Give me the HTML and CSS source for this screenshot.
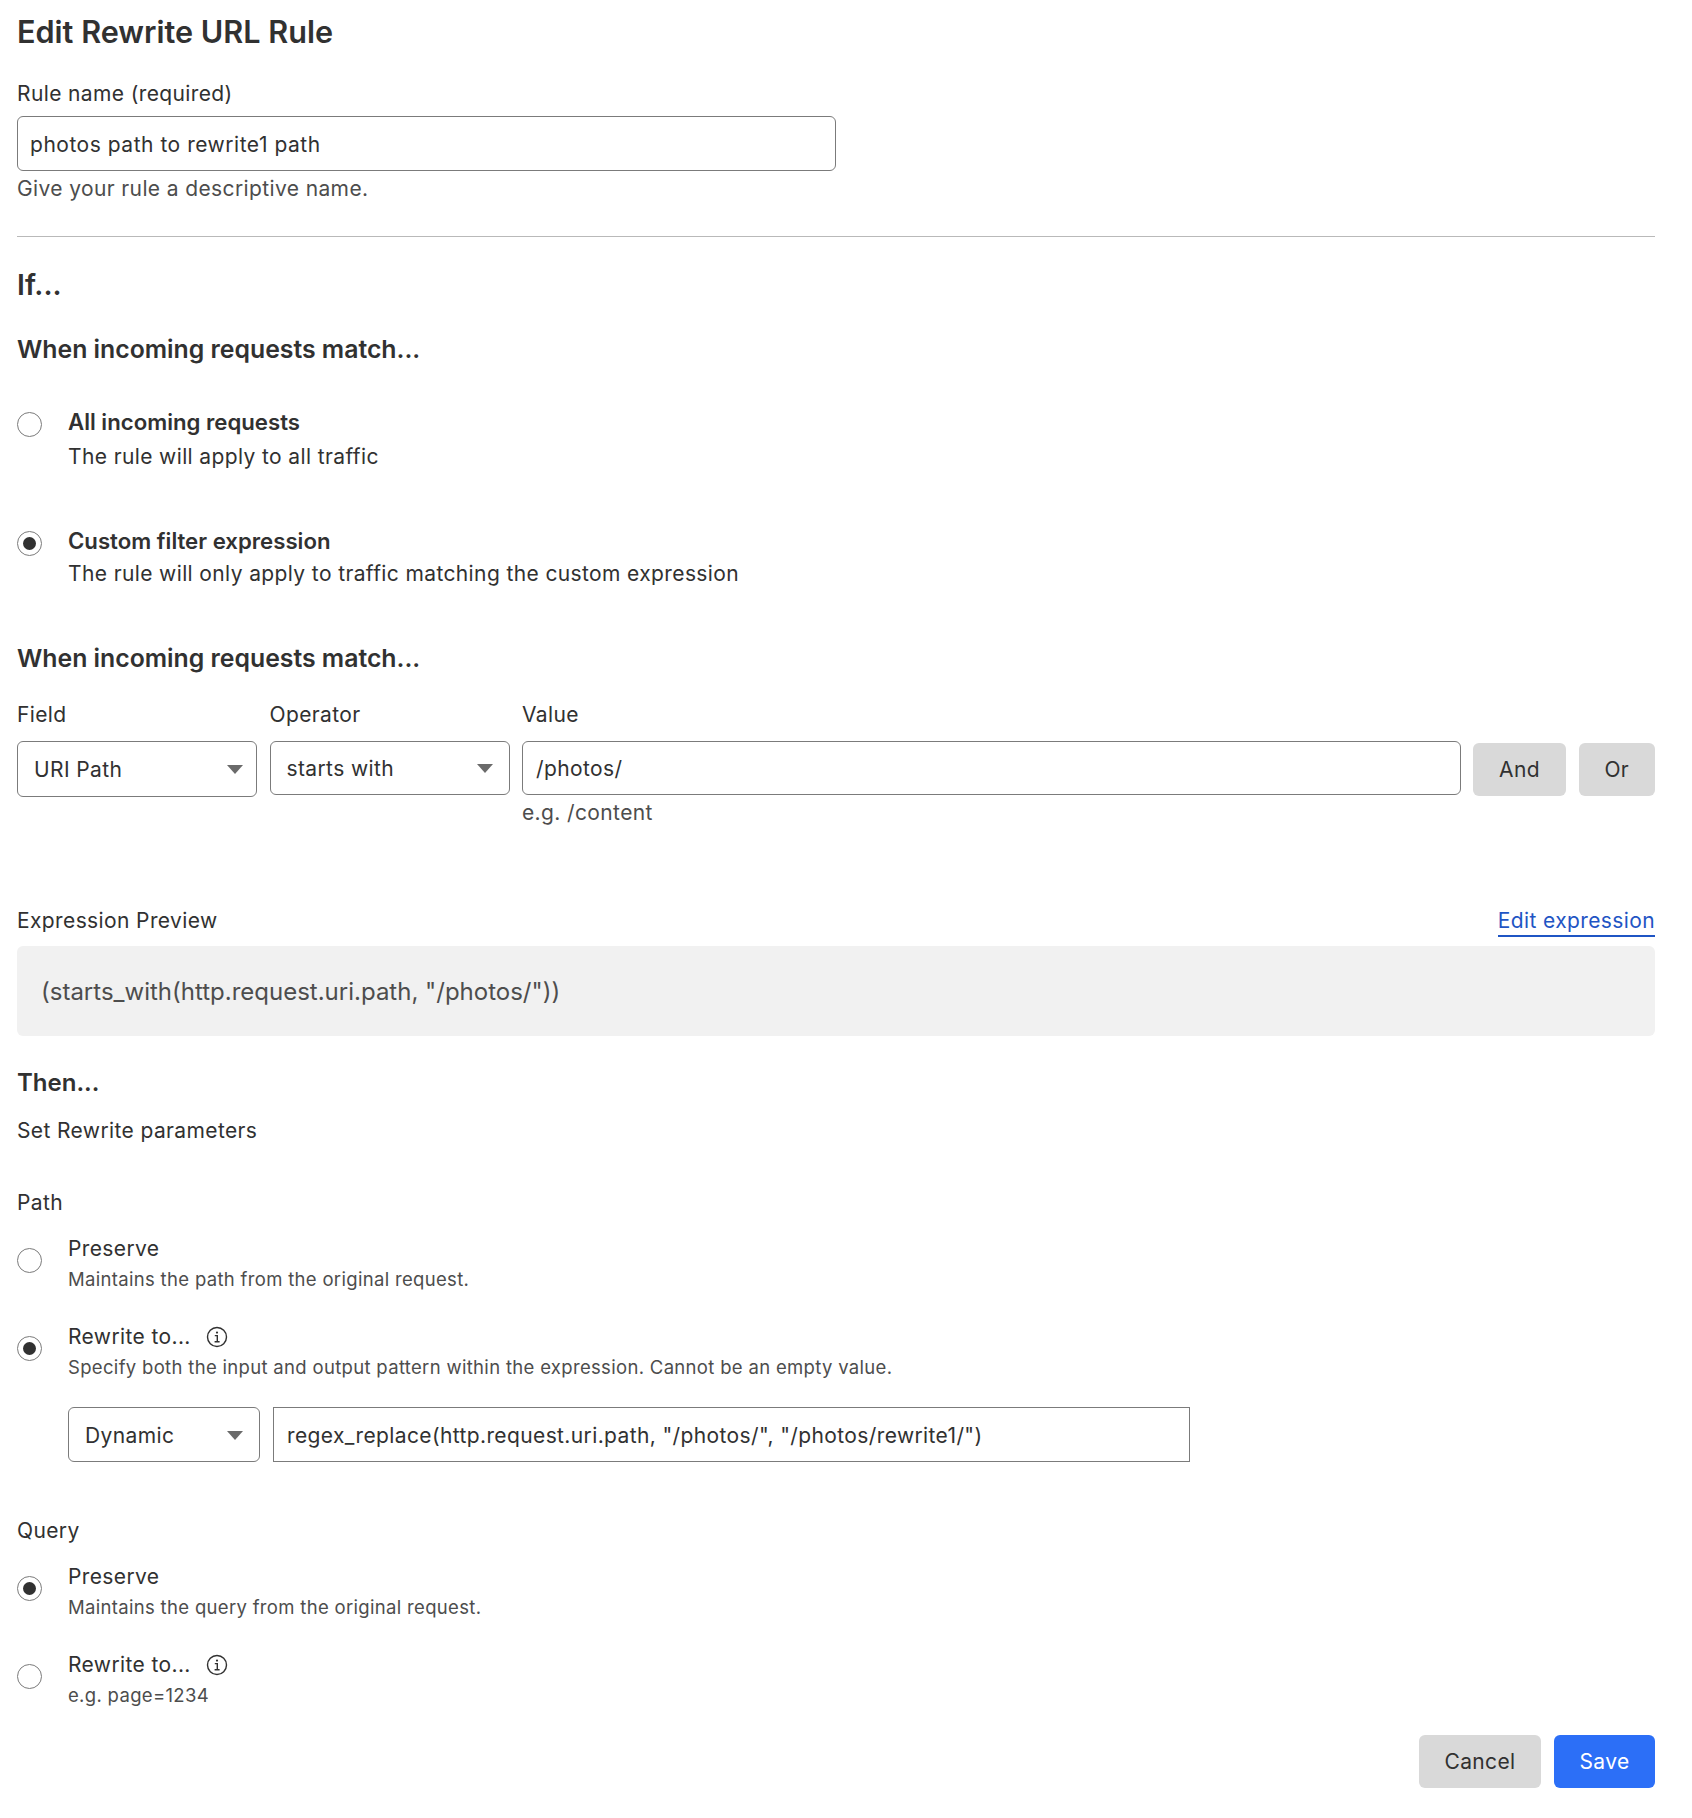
FILE: index.html
```html
<!DOCTYPE html>
<html lang="en">
<head>
    <meta charset="UTF-8">
    <meta name="viewport" content="width=device-width, initial-scale=1.0">
    <title>Edit Rewrite URL Rule</title>
    <link rel="stylesheet" href="styles.css">
</head>
<body>
    <main class="page">
        <h1>Edit Rewrite URL Rule</h1>

        <!-- Rule name -->
        <div class="label name-label nudge">Rule name (required)</div>
        <div class="input name-input">photos path to rewrite1 path</div>
        <div class="hint name-hint nudge">Give your rule a descriptive name.</div>
        <hr class="divider">

        <!-- If -->
        <h2 class="if-title">If...</h2>
        <h3 class="match-first">When incoming requests match...</h3>

        <div class="option option-big option-all">
            <span class="radio"></span>
            <div>
                <div class="option-title strong">All incoming requests</div>
                <div class="option-desc nudge">The rule will apply to all traffic</div>
            </div>
        </div>
        <div class="option option-big option-custom">
            <span class="radio checked"></span>
            <div>
                <div class="option-title strong">Custom filter expression</div>
                <div class="option-desc">The rule will only apply to traffic matching the custom expression</div>
            </div>
        </div>

        <h3 class="match-second">When incoming requests match...</h3>

        <div class="filter-grid">
            <div class="label">Field</div>
            <div class="label">Operator</div>
            <div class="label">Value</div>
            <div></div>
            <div></div>
            <div class="select select-tall">URI Path<span class="arrow arrow-field"></span></div>
            <div class="select">starts with<span class="arrow arrow-operator"></span></div>
            <div class="input">/photos/</div>
            <div class="btn btn-gray btn-small">And</div>
            <div class="btn btn-gray btn-small">Or</div>
            <div></div>
            <div></div>
            <div class="hint">e.g. /content</div>
        </div>

        <!-- Preview -->
        <div class="preview-head">
            <div class="label">Expression Preview</div>
            <a class="link">Edit expression</a>
        </div>
        <div class="preview">(starts_with(http.request.uri.path, "/photos/"))</div>

        <!-- Then -->
        <h3 class="then-title">Then...</h3>
        <div class="label set-label">Set Rewrite parameters</div>

        <div class="label path-label">Path</div>
        <div class="option first-option">
            <span class="radio"></span>
            <div>
                <div class="option-title">Preserve</div>
                <div class="option-note">Maintains the path from the original request.</div>
            </div>
        </div>
        <div class="option next-option">
            <span class="radio checked"></span>
            <div>
                <div class="option-title">Rewrite to...
                    <svg class="info" width="22" height="22" viewBox="0 0 22 22" fill="none" stroke="#313131">
                        <circle cx="11" cy="11" r="9.5" stroke-width="1.4"/>
                        <circle cx="11" cy="6.6" r="1.1" fill="#313131" stroke="none"/>
                        <path d="M8.8 9.6h2.5v6M8.6 15.8h5" stroke-width="1.4"/>
                    </svg>
                </div>
                <div class="option-note">Specify both the input and output pattern within the expression. Cannot be an empty value.</div>
            </div>
        </div>
        <div class="rewrite-row">
            <div class="select select-dynamic">Dynamic<span class="arrow arrow-dynamic"></span></div>
            <div class="input input-square">regex_replace(http.request.uri.path, "/photos/", "/photos/rewrite1/")</div>
        </div>

        <div class="label query-label">Query</div>
        <div class="option first-option">
            <span class="radio checked"></span>
            <div>
                <div class="option-title">Preserve</div>
                <div class="option-note">Maintains the query from the original request.</div>
            </div>
        </div>
        <div class="option next-option">
            <span class="radio"></span>
            <div>
                <div class="option-title">Rewrite to...
                    <svg class="info" width="22" height="22" viewBox="0 0 22 22" fill="none" stroke="#313131">
                        <circle cx="11" cy="11" r="9.5" stroke-width="1.4"/>
                        <circle cx="11" cy="6.6" r="1.1" fill="#313131" stroke="none"/>
                        <path d="M8.8 9.6h2.5v6M8.6 15.8h5" stroke-width="1.4"/>
                    </svg>
                </div>
                <div class="option-note">e.g. page=1234</div>
            </div>
        </div>

        <div class="actions">
            <div class="btn btn-gray btn-cancel">Cancel</div>
            <div class="btn btn-blue">Save</div>
        </div>
    </main>
</body>
</html>
```

FILE: styles.css
```css
/* General */
body {
    margin: 0;
    background-color: #fff;
    color: #313131;
    font-family: Inter, "Liberation Sans", sans-serif;
    font-size: 21px;
    line-height: 26px;
    letter-spacing: 0.38px;
}
.page {
    box-sizing: border-box;
    width: 1692px;
    height: 1818px;
    padding: 14px 37px 0 17px;
}
h1 {
    margin: 0;
    font-size: 30.6px;
    line-height: 36px;
    font-weight: 600;
    letter-spacing: 0;
}
h2 {
    margin: 0;
    font-size: 28.5px;
    line-height: 36px;
    font-weight: 600;
    letter-spacing: 0;
}
h3 {
    margin: 0;
    font-size: 24.8px;
    line-height: 30px;
    font-weight: 600;
    letter-spacing: 0;
}
.label { color: #313131; }
.hint { color: #4d4d4d; }
.nudge {
    padding-top: 1px;
    margin-bottom: -1px;
}

/* Form controls */
.input, .select {
    box-sizing: border-box;
    height: 54px;
    border: 1px solid #7b7b7b;
    border-radius: 6px;
    display: flex;
    align-items: center;
    background-color: #fff;
}
.input { padding: 1px 13px 0; }
.select {
    position: relative;
    padding: 1px 16px 0;
}
.select-tall { height: 56px; }
.arrow {
    position: absolute;
    right: 14px;
    top: 50%;
    margin-top: -4px;
    border-left: 8px solid transparent;
    border-right: 8px solid transparent;
    border-top: 9px solid #6a6a6a;
}
.arrow-field { right: 13px; }
.arrow-operator { right: 16px; }
.arrow-dynamic { right: 16px; }
.btn {
    display: flex;
    align-items: center;
    justify-content: center;
    height: 53px;
    border-radius: 6px;
}
.btn-small { margin-top: 2px; }
.btn-gray { background-color: #d9d9d9; }
.btn-blue {
    width: 101px;
    background-color: #2c6ff7;
    color: #fff;
}
.btn-cancel { width: 122px; }

/* Top section */
.name-label { margin-top: 30px; }
.name-input {
    width: 819px;
    height: 55px;
    margin-top: 10px;
    padding: 2px 12px 0;
    letter-spacing: 0.52px;
}
.name-hint { margin-top: 4px; }
.divider {
    margin: 35px 0 0;
    border: none;
    border-top: 1px solid #b9b9b9;
}
.if-title { margin-top: 30px; }
.match-first { margin-top: 31px; }
.match-second { margin-top: 56px; }

/* Radio options */
.option { display: flex; }
.radio {
    flex: none;
    box-sizing: border-box;
    display: flex;
    align-items: center;
    justify-content: center;
    width: 25px;
    height: 25px;
    margin: 12px 26px 0 0;
    border: 1px solid #7b7b7b;
    border-radius: 50%;
    background-color: #fff;
}
.radio.checked::after {
    content: "";
    width: 13px;
    height: 13px;
    border-radius: 50%;
    background-color: #313131;
}
.option-big .radio { margin-top: 3px; }
.option-all { margin-top: 45px; }
.option-custom { margin-top: 59px; }
.option-title { display: flex; align-items: center; }
.strong {
    font-weight: 600;
    font-size: 22.2px;
    letter-spacing: 0;
}
.option-desc { margin-top: 8px; }
.option-custom .option-desc { margin-top: 7px; }
.option-note {
    margin-top: 6px;
    color: #4d4d4d;
    font-size: 18.5px;
    line-height: 22px;
    letter-spacing: 0.32px;
}
.first-option { margin-top: 20px; }
.next-option { margin-top: 34px; }
.info { margin-left: 15px; }

/* Filter row */
.filter-grid {
    display: grid;
    grid-template-columns: 240px 240px 1fr 93px 76.5px;
    column-gap: 12.5px;
    margin-top: 29px;
}
.filter-grid > .label { margin-bottom: 13px; }
.filter-grid > .hint { margin-top: 3px; }

/* Expression preview */
.preview-head {
    display: flex;
    justify-content: space-between;
    margin-top: 82px;
}
.link {
    height: 27px;
    border-bottom: 2px solid #1f55c4;
    color: #1f55c4;
}
.preview {
    box-sizing: border-box;
    display: flex;
    align-items: center;
    height: 90px;
    margin-top: 9px;
    padding: 2px 24px 0;
    border-radius: 6px;
    background-color: #f1f1f1;
    color: #4d4d4d;
    font-size: 24px;
    letter-spacing: 0;
}

/* Then section */
.then-title {
    margin-top: 32px;
    font-size: 24px;
}
.set-label { margin-top: 20px; }
.path-label { margin-top: 46px; }
.rewrite-row {
    display: flex;
    gap: 13px;
    margin: 29px 0 0 51px;
}
.select-dynamic {
    width: 192px;
    height: 55px;
    padding-top: 2px;
}
.input-square {
    width: 917px;
    height: 55px;
    padding-top: 2px;
    border-radius: 0;
}
.query-label { margin-top: 56px; }

/* Bottom buttons */
.actions {
    display: flex;
    justify-content: flex-end;
    gap: 13px;
    margin-top: 29px;
}
```
